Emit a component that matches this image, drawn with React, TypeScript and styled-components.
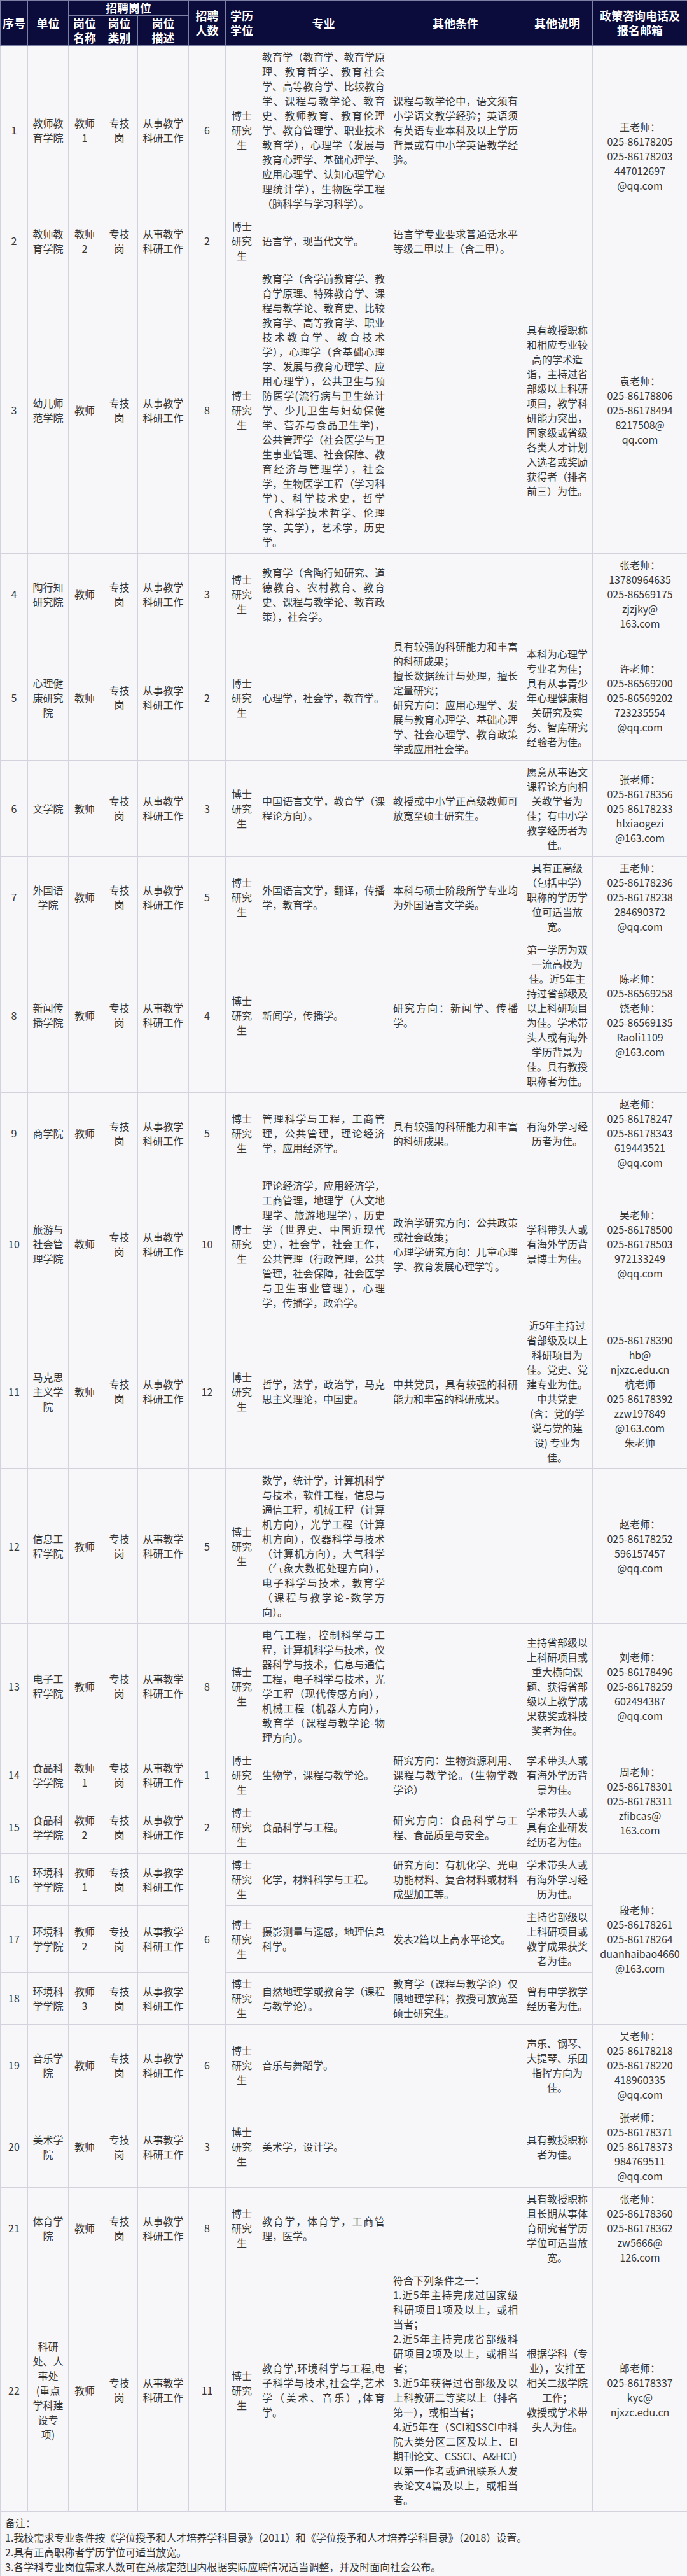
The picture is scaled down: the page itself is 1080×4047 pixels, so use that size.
import React from "react";
import styled, { createGlobalStyle } from "styled-components";

const GlobalStyle = createGlobalStyle`
  html, body {
    margin: 0;
    padding: 0;
    background: #ffffff;
  }
  body {
    font-family: "Noto Sans CJK SC", "Noto Sans", sans-serif;
  }
`;

const Table = styled.table`
  width: 1080px;
  table-layout: fixed;
  border-collapse: collapse;
  background: #f7f7fa;
  color: #363636;
  font-size: 16px;
  line-height: 23px;
`;

const HeadRow = styled.tr<{ $h: number }>`
  height: ${(p) => p.$h}px;
`;

const HeadCell = styled.th`
  background: #0c0c3c;
  color: #ffffff;
  font-weight: 700;
  font-size: 18px;
  line-height: 23px;
  padding: 0 2px;
  border: 1px solid #7c80a4;
  text-align: center;
  vertical-align: middle;
`;

const Cell = styled.td<{ $align?: "center" | "justify" | "left" }>`
  padding: 6px;
  border: 1px solid #d2d3dc;
  text-align: ${(p) => p.$align ?? "center"};
  text-align-last: ${(p) => (p.$align === "justify" ? "left" : "auto")};
  vertical-align: middle;
  white-space: pre-line;
  overflow-wrap: anywhere;
`;

const NoteCell = styled.td`
  padding: 6px 7px;
  border: 1px solid #d2d3dc;
  text-align: left;
  white-space: pre-line;
`;

type Row = {
  no: string;
  unit: string;
  name: string;
  count?: string;
  countSpan?: number;
  major: string;
  cond: string;
  note: string;
  contact?: string[];
  contactSpan?: number;
};

const widths = [43, 64, 51, 58, 80, 58, 51, 206, 209, 111, 149];

const rows: Row[] = [
  {
    no: "1",
    unit: "教师教育学院",
    name: "教师1",
    count: "6",
    major:
      "教育学（教育学、教育学原理、教育哲学、教育社会学、高等教育学、比较教育学、课程与教学论、教育史、教师教育、教育伦理学、教育管理学、职业技术教育学），心理学（发展与教育心理学、基础心理学、应用心理学、认知心理学心理统计学），生物医学工程（脑科学与学习科学）。",
    cond: "课程与教学论中，语文须有小学语文教学经验；英语须有英语专业本科及以上学历背景或有中小学英语教学经验。",
    note: "",
    contact: ["王老师：", "025-86178205", "025-86178203", "447012697", "@qq.com"],
    contactSpan: 2,
  },
  {
    no: "2",
    unit: "教师教育学院",
    name: "教师2",
    count: "2",
    major: "语言学，现当代文学。",
    cond: "语言学专业要求普通话水平等级二甲以上（含二甲）。",
    note: "",
  },
  {
    no: "3",
    unit: "幼儿师范学院",
    name: "教师",
    count: "8",
    major:
      "教育学（含学前教育学、教育学原理、特殊教育学、课程与教学论、教育史、比较教育学、高等教育学、职业技术教育学、教育技术学），心理学（含基础心理学、发展与教育心理学、应用心理学），公共卫生与预防医学(流行病与卫生统计学、少儿卫生与妇幼保健学、营养与食品卫生学)，公共管理学（社会医学与卫生事业管理、社会保障、教育经济与管理学），社会学，生物医学工程（学习科学）、科学技术史，哲学（含科学技术哲学、伦理学、美学），艺术学，历史学。",
    cond: "",
    note: "具有教授职称和相应专业较高的学术造诣，主持过省部级以上科研项目，教学科研能力突出，国家级或省级各类人才计划入选者或奖励获得者（排名前三）为佳。",
    contact: ["袁老师：", "025-86178806", "025-86178494", "8217508@", "qq.com"],
  },
  {
    no: "4",
    unit: "陶行知研究院",
    name: "教师",
    count: "3",
    major: "教育学（含陶行知研究、道德教育、农村教育、教育史、课程与教学论、教育政策），社会学。",
    cond: "",
    note: "",
    contact: ["张老师：", "13780964635", "025-86569175", "zjzjky@", "163.com"],
  },
  {
    no: "5",
    unit: "心理健康研究院",
    name: "教师",
    count: "2",
    major: "心理学，社会学，教育学。",
    cond: "具有较强的科研能力和丰富的科研成果；\n擅长数据统计与处理，擅长定量研究；\n研究方向：应用心理学、发展与教育心理学、基础心理学、社会心理学、教育政策学或应用社会学。",
    note: "本科为心理学专业者为佳；具有从事青少年心理健康相关研究及实务、智库研究经验者为佳。",
    contact: ["许老师：", "025-86569200", "025-86569202", "723235554", "@qq.com"],
  },
  {
    no: "6",
    unit: "文学院",
    name: "教师",
    count: "3",
    major: "中国语言文学，教育学（课程论方向）。",
    cond: "教授或中小学正高级教师可放宽至硕士研究生。",
    note: "愿意从事语文课程论方向相关教学者为佳；有中小学教学经历者为佳。",
    contact: ["张老师：", "025-86178356", "025-86178233", "hlxiaogezi", "@163.com"],
  },
  {
    no: "7",
    unit: "外国语学院",
    name: "教师",
    count: "5",
    major: "外国语言文学，翻译，传播学，教育学。",
    cond: "本科与硕士阶段所学专业均为外国语言文学类。",
    note: "具有正高级（包括中学）职称的学历学位可适当放宽。",
    contact: ["王老师：", "025-86178236", "025-86178238", "284690372", "@qq.com"],
  },
  {
    no: "8",
    unit: "新闻传播学院",
    name: "教师",
    count: "4",
    major: "新闻学，传播学。",
    cond: "研究方向：新闻学、传播学。",
    note: "第一学历为双一流高校为佳。近5年主持过省部级及以上科研项目为佳。学术带头人或有海外学历背景为佳。具有教授职称者为佳。",
    contact: ["陈老师：", "025-86569258", "饶老师：", "025-86569135", "Raoli1109", "@163.com"],
  },
  {
    no: "9",
    unit: "商学院",
    name: "教师",
    count: "5",
    major: "管理科学与工程，工商管理，公共管理，理论经济学，应用经济学。",
    cond: "具有较强的科研能力和丰富的科研成果。",
    note: "有海外学习经历者为佳。",
    contact: ["赵老师：", "025-86178247", "025-86178343", "619443521", "@qq.com"],
  },
  {
    no: "10",
    unit: "旅游与社会管理学院",
    name: "教师",
    count: "10",
    major:
      "理论经济学，应用经济学，工商管理，地理学（人文地理学、旅游地理学），历史学（世界史、中国近现代史），社会学，社会工作，公共管理（行政管理，公共管理，社会保障，社会医学与卫生事业管理），心理学，传播学，政治学。",
    cond: "政治学研究方向：公共政策或社会政策；\n心理学研究方向：儿童心理学、教育发展心理学等。",
    note: "学科带头人或有海外学历背景博士为佳。",
    contact: ["吴老师：", "025-86178500", "025-86178503", "972133249", "@qq.com"],
  },
  {
    no: "11",
    unit: "马克思主义学院",
    name: "教师",
    count: "12",
    major: "哲学，法学，政治学，马克思主义理论，中国史。",
    cond: "中共党员，具有较强的科研能力和丰富的科研成果。",
    note: "近5年主持过省部级及以上科研项目为佳。党史、党建专业为佳。中共党史(含：党的学说与党的建设) 专业为佳。",
    contact: ["025-86178390", "hb@", "njxzc.edu.cn", "杭老师", "025-86178392", "zzw197849", "@163.com", "朱老师"],
  },
  {
    no: "12",
    unit: "信息工程学院",
    name: "教师",
    count: "5",
    major:
      "数学，统计学，计算机科学与技术，软件工程，信息与通信工程，机械工程（计算机方向），光学工程（计算机方向），仪器科学与技术（计算机方向），大气科学（气象大数据处理方向），电子科学与技术，教育学（课程与教学论-数学方向）。",
    cond: "",
    note: "",
    contact: ["赵老师：", "025-86178252", "596157457", "@qq.com"],
  },
  {
    no: "13",
    unit: "电子工程学院",
    name: "教师",
    count: "8",
    major:
      "电气工程，控制科学与工程，计算机科学与技术，仪器科学与技术，信息与通信工程，电子科学与技术，光学工程（现代传感方向），机械工程（机器人方向），教育学（课程与教学论-物理方向）。",
    cond: "",
    note: "主持省部级以上科研项目或重大横向课题、获得省部级以上教学成果获奖或科技奖者为佳。",
    contact: ["刘老师：", "025-86178496", "025-86178259", "602494387", "@qq.com"],
  },
  {
    no: "14",
    unit: "食品科学学院",
    name: "教师1",
    count: "1",
    major: "生物学，课程与教学论。",
    cond: "研究方向：生物资源利用、课程与教学论。（生物学教学论）",
    note: "学术带头人或有海外学历背景为佳。",
    contact: ["周老师：", "025-86178301", "025-86178311", "zfibcas@", "163.com"],
    contactSpan: 2,
  },
  {
    no: "15",
    unit: "食品科学学院",
    name: "教师2",
    count: "2",
    major: "食品科学与工程。",
    cond: "研究方向：食品科学与工程、食品质量与安全。",
    note: "学术带头人或具有企业研发经历者为佳。",
  },
  {
    no: "16",
    unit: "环境科学学院",
    name: "教师1",
    count: "6",
    countSpan: 3,
    major: "化学，材料科学与工程。",
    cond: "研究方向：有机化学、光电功能材料、复合材料或材料成型加工等。",
    note: "学术带头人或有海外学习经历为佳。",
    contact: ["段老师：", "025-86178261", "025-86178264", "duanhaibao4660", "@163.com"],
    contactSpan: 3,
  },
  {
    no: "17",
    unit: "环境科学学院",
    name: "教师2",
    major: "摄影测量与遥感，地理信息科学。",
    cond: "发表2篇以上高水平论文。",
    note: "主持省部级以上科研项目或教学成果获奖者为佳。",
  },
  {
    no: "18",
    unit: "环境科学学院",
    name: "教师3",
    major: "自然地理学或教育学（课程与教学论）。",
    cond: "教育学（课程与教学论）仅限地理学科；教授可放宽至硕士研究生。",
    note: "曾有中学教学经历者为佳。",
  },
  {
    no: "19",
    unit: "音乐学院",
    name: "教师",
    count: "6",
    major: "音乐与舞蹈学。",
    cond: "",
    note: "声乐、钢琴、大提琴、乐团指挥方向为佳。",
    contact: ["吴老师：", "025-86178218", "025-86178220", "418960335", "@qq.com"],
  },
  {
    no: "20",
    unit: "美术学院",
    name: "教师",
    count: "3",
    major: "美术学，设计学。",
    cond: "",
    note: "具有教授职称者为佳。",
    contact: ["张老师：", "025-86178371", "025-86178373", "984769511", "@qq.com"],
  },
  {
    no: "21",
    unit: "体育学院",
    name: "教师",
    count: "8",
    major: "教育学，体育学，工商管理，医学。",
    cond: "",
    note: "具有教授职称且长期从事体育研究者学历学位可适当放宽。",
    contact: ["张老师：", "025-86178360", "025-86178362", "zw5666@", "126.com"],
  },
  {
    no: "22",
    unit: "科研处、人事处(重点学科建设专项)",
    name: "教师",
    count: "11",
    major: "教育学,环境科学与工程,电子科学与技术,社会学,艺术学（美术、音乐）,体育学。",
    cond:
      "符合下列条件之一：\n1.近5年主持完成过国家级科研项目1项及以上，或相当者；\n2.近5年主持完成省部级科研项目2项及以上，或相当者；\n3.近5年获得过省部级及以上科教研二等奖以上（排名第一），或相当者；\n4.近5年在（SCI和SSCI中科院大类分区二区及以上、EI期刊论文、CSSCI、A&HCI）以第一作者或通讯联系人发表论文4篇及以上，或相当者。",
    note: "根据学科（专业），安排至相关二级学院工作；\n教授或学术带头人为佳。",
    contact: ["郎老师：", "025-86178337", "kyc@", "njxzc.edu.cn"],
  },
];

const notes =
  "备注：\n1.我校需求专业条件按《学位授予和人才培养学科目录》（2011）和《学位授予和人才培养学科目录》（2018）设置。\n2.具有正高职称者学历学位可适当放宽。\n3.各学科专业岗位需求人数可在总核定范围内根据实际应聘情况适当调整，并及时面向社会公布。";

const App: React.FC = () => {
  return (
    <>
      <GlobalStyle />
      <Table>
        <colgroup>
          {widths.map((w, i) => (
            <col key={i} style={{ width: w }} />
          ))}
        </colgroup>
        <thead>
          <HeadRow $h={24}>
            <HeadCell rowSpan={2}>序号</HeadCell>
            <HeadCell rowSpan={2}>单位</HeadCell>
            <HeadCell colSpan={3}>招聘岗位</HeadCell>
            <HeadCell rowSpan={2}>
              招聘
              <br />
              人数
            </HeadCell>
            <HeadCell rowSpan={2}>
              学历
              <br />
              学位
            </HeadCell>
            <HeadCell rowSpan={2}>专业</HeadCell>
            <HeadCell rowSpan={2}>其他条件</HeadCell>
            <HeadCell rowSpan={2}>其他说明</HeadCell>
            <HeadCell rowSpan={2}>
              政策咨询电话及
              <br />
              报名邮箱
            </HeadCell>
          </HeadRow>
          <HeadRow $h={47}>
            <HeadCell>
              岗位
              <br />
              名称
            </HeadCell>
            <HeadCell>
              岗位
              <br />
              类别
            </HeadCell>
            <HeadCell>
              岗位
              <br />
              描述
            </HeadCell>
          </HeadRow>
        </thead>
        <tbody>
          {rows.map((r) => (
            <tr key={r.no}>
              <Cell>{r.no}</Cell>
              <Cell>{r.unit}</Cell>
              <Cell>{r.name}</Cell>
              <Cell>专技岗</Cell>
              <Cell>从事教学科研工作</Cell>
              {r.count !== undefined && <Cell rowSpan={r.countSpan ?? 1}>{r.count}</Cell>}
              <Cell>博士研究生</Cell>
              <Cell $align="justify">{r.major}</Cell>
              <Cell $align="justify">{r.cond}</Cell>
              <Cell>{r.note}</Cell>
              {r.contact && <Cell rowSpan={r.contactSpan ?? 1}>{r.contact.join("\n")}</Cell>}
            </tr>
          ))}
          <tr>
            <NoteCell colSpan={11}>{notes}</NoteCell>
          </tr>
        </tbody>
      </Table>
    </>
  );
};

export default App;
